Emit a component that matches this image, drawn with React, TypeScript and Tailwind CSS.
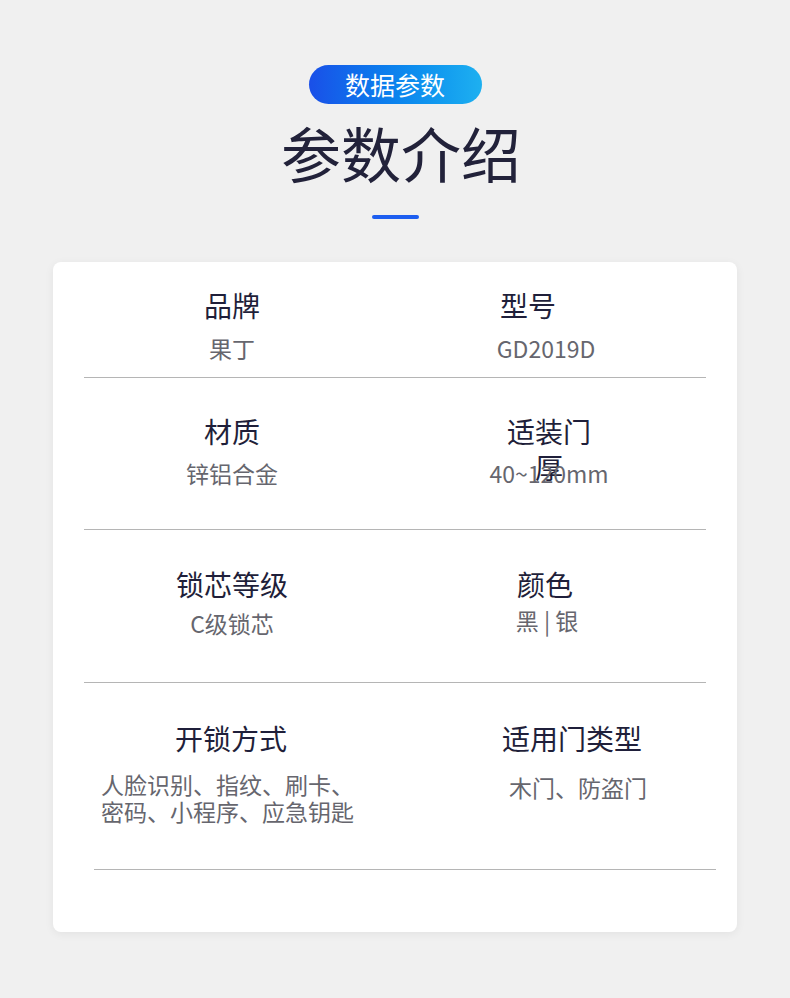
import React from "react";

const font = { fontFamily: '"Noto Sans CJK SC", "Noto Sans", sans-serif' };

export default function App() {
  return (
    <div className="w-full min-h-[998px] bg-[#f0f0f0] flex flex-col items-center" style={font}>
      <div className="mt-[65px] w-[173px] h-[39px] rounded-full bg-gradient-to-r from-[#1a4fe8] to-[#1eb0f0] flex items-center justify-center text-white text-[25px] leading-[39px]">
        数据参数
      </div>
      <h1 className="mt-[12px] ml-[12px] text-[60px] leading-[72px] text-[#22223a] font-normal">参数介绍</h1>
      <div className="mt-[27px] w-[47px] h-[4px] rounded-full bg-[#1d5ef0]" />

      <div className="mt-[43px] w-[684px] h-[670px] bg-white rounded-[8px] shadow-[0_2px_10px_rgba(0,0,0,0.06)] flex flex-col">
        {/* Row 1 */}
        <div className="mx-[31px] flex border-b border-[#b5b5b5] pt-[25px] pb-[15px]">
          <div className="w-[296px] flex flex-col items-center">
            <div className="h-[36px] text-[28px] leading-[36px] text-[#1f1f3a]">品牌</div>
            <div className="mt-[12px] text-[23px] leading-[27px] text-[#66666e]">果丁</div>
          </div>
          <div className="w-[326px] flex flex-col">
            <div className="h-[36px] pr-[30px] text-center text-[28px] leading-[36px] text-[#1f1f3a]">型号</div>
            <div className="mt-[12px] pl-[6px] text-center text-[23px] leading-[27px] text-[#66666e]">GD2019D</div>
          </div>
        </div>

        {/* Row 2 */}
        <div className="mx-[31px] flex border-b border-[#b5b5b5] pt-[35px] pb-[42px]">
          <div className="w-[296px] flex flex-col items-center">
            <div className="h-[36px] text-[28px] leading-[36px] text-[#1f1f3a]">材质</div>
            <div className="mt-[11px] text-[23px] leading-[27px] text-[#66666e]">锌铝合金</div>
          </div>
          <div className="w-[326px] flex flex-col">
            <div className="h-[36px] pl-[12px] flex justify-center">
              <div className="w-[90px] text-center text-[28px] leading-[36px] text-[#1f1f3a]">适装门厚</div>
            </div>
            <div className="mt-[11px] pl-[12px] text-center text-[23px] leading-[27px] text-[#66666e]">40~120mm</div>
          </div>
        </div>

        {/* Row 3 */}
        <div className="mx-[31px] flex border-b border-[#b5b5b5] pt-[36px] pb-[45px]">
          <div className="w-[296px] flex flex-col items-center">
            <div className="h-[36px] text-[28px] leading-[36px] text-[#1f1f3a]">锁芯等级</div>
            <div className="mt-[8px] text-[23px] leading-[27px] text-[#66666e]">C级锁芯</div>
          </div>
          <div className="w-[326px] flex flex-col">
            <div className="h-[36px] pl-[4px] text-center text-[28px] leading-[36px] text-[#1f1f3a]">颜色</div>
            <div className="mt-[5px] pl-[8px] text-center text-[23px] leading-[27px] text-[#66666e]">黑 | 银</div>
          </div>
        </div>

        {/* Row 4 */}
        <div className="ml-[41px] mr-[21px] flex border-b border-[#b5b5b5] pt-[37px] pb-[44px]">
          <div className="w-[296px] flex flex-col">
            <div className="h-[36px] pr-[22px] text-center text-[28px] leading-[36px] text-[#1f1f3a]">开锁方式</div>
            <div className="mt-[15px] pl-[7px] text-left text-[23px] leading-[27px] text-[#66666e]">
              人脸识别、指纹、刷卡、
              <br />
              密码、小程序、应急钥匙
            </div>
          </div>
          <div className="w-[326px] flex flex-col">
            <div className="h-[36px] pl-[38px] text-center text-[28px] leading-[36px] text-[#1f1f3a]">适用门类型</div>
            <div className="mt-[18px] pl-[50px] text-center text-[23px] leading-[27px] text-[#66666e]">木门、防盗门</div>
          </div>
        </div>
      </div>
    </div>
  );
}
